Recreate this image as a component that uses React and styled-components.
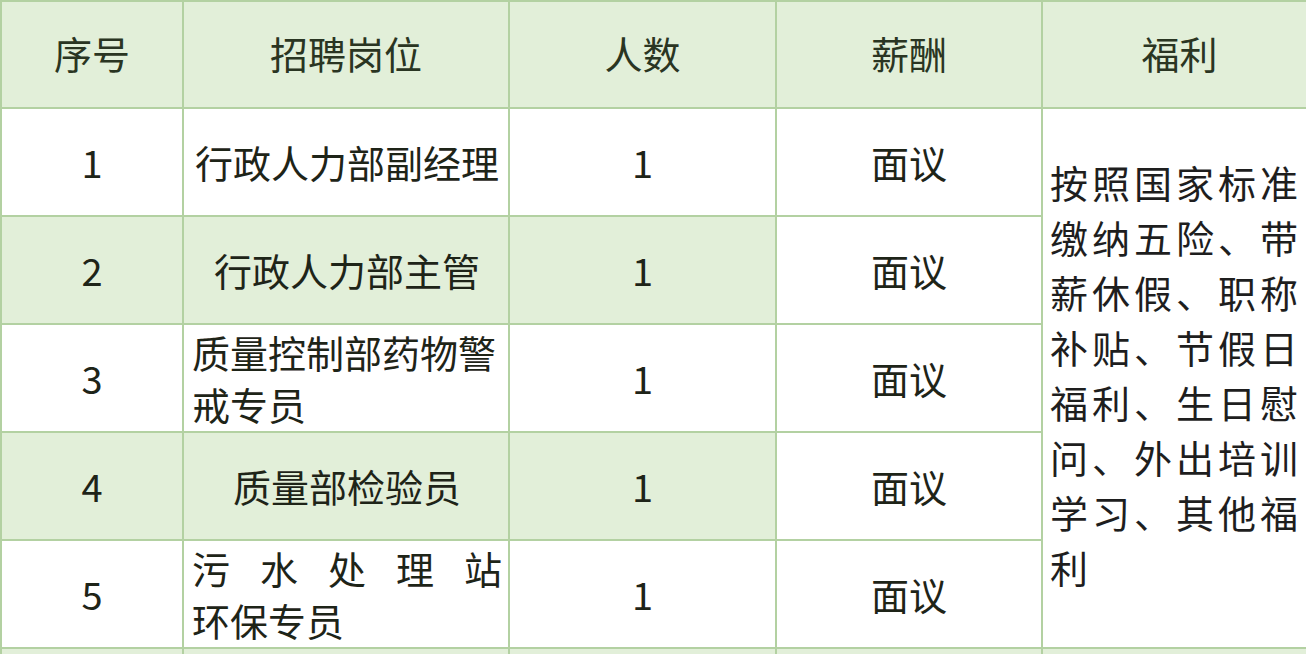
import styled, { createGlobalStyle } from "styled-components";

const GlobalStyle = createGlobalStyle`
  html, body {
    margin: 0;
    padding: 0;
    background: #ffffff;
    overflow: hidden;
  }
  body {
    font-family: "Noto Sans CJK SC", "Noto Sans", sans-serif;
  }
`;

const jobs = [
  { no: 1, title: ["行政人力部副经理"], align: "center" },
  { no: 2, title: ["行政人力部主管"], align: "center" },
  { no: 3, title: ["质量控制部药物警戒专员"], align: "left" },
  { no: 4, title: ["质量部检验员"], align: "center" },
  { no: 5, title: ["污水处理站", "环保专员"], align: "left", spread: true },
];

const benefits = "按照国家标准缴纳五险、带薪休假、职称补贴、节假日福利、生日慰问、外出培训学习、其他福利";

export default function App() {
  return (
    <>
      <GlobalStyle />
      <Page>
        <Table>
          <colgroup>
            <col style={{ width: 182 }} />
            <col style={{ width: 326 }} />
            <col style={{ width: 267 }} />
            <col style={{ width: 266 }} />
            <col style={{ width: 275 }} />
          </colgroup>
          <thead>
            <tr>
              <Head>序号</Head>
              <Head>招聘岗位</Head>
              <Head>人数</Head>
              <Head>薪酬</Head>
              <Head>福利</Head>
            </tr>
          </thead>
          <tbody>
            {jobs.map((job, i) => {
              const shaded = i % 2 === 1;
              return (
                <Row key={job.no}>
                  <Cell shaded={shaded}>{job.no}</Cell>
                  <TitleCell shaded={shaded} align={job.align}>
                    {job.title.map((line, j) =>
                      job.spread && j === 0 ? (
                        <SpreadLine key={j}>
                          {line.split("").map((ch, k) => (
                            <span key={k}>{ch}</span>
                          ))}
                        </SpreadLine>
                      ) : (
                        <Line key={j}>{line}</Line>
                      )
                    )}
                  </TitleCell>
                  <Cell shaded={shaded}>1</Cell>
                  <Cell>面议</Cell>
                  {i === 0 && <BenefitCell rowSpan={5}>{benefits}</BenefitCell>}
                </Row>
              );
            })}
            <Row>
              <Cell shaded />
              <Cell shaded />
              <Cell shaded />
              <Cell shaded />
              <Cell shaded />
            </Row>
          </tbody>
        </Table>
      </Page>
    </>
  );
}

const Page = styled.div`
  width: 1306px;
  height: 654px;
  overflow: hidden;
`;

const Table = styled.table`
  table-layout: fixed;
  width: 1316px;
  border-collapse: collapse;
  color: #1e2418;
  font-size: 38px;
  line-height: 52px;
`;

const Head = styled.th`
  height: 101px;
  padding: 0 0 4px;
  background: #e2efd9;
  border: 2px solid #b3d1a2;
  font-weight: 400;
  color: #2a3522;
  text-align: center;
  vertical-align: middle;
`;

const Row = styled.tr`
  height: 108px;
`;

const Cell = styled.td`
  padding: 0;
  background: ${(p) => (p.shaded ? "#e2efd9" : "#ffffff")};
  border: 2px solid #b3d1a2;
  text-align: center;
  vertical-align: middle;
`;

const TitleCell = styled(Cell)`
  padding: 0 6px 0 8px;
  text-align: ${(p) => p.align};
`;

const Line = styled.div`
  display: block;
`;

const SpreadLine = styled.div`
  display: flex;
  justify-content: space-between;
`;

const BenefitCell = styled.td`
  padding: 0 0 8px 7px;
  background: #ffffff;
  border: 2px solid #b3d1a2;
  vertical-align: middle;
  text-align: left;
  line-height: 55px;
  letter-spacing: 4px;
  word-break: break-all;
  font-size: 38px;
  color: #1e1e1e;
`;
